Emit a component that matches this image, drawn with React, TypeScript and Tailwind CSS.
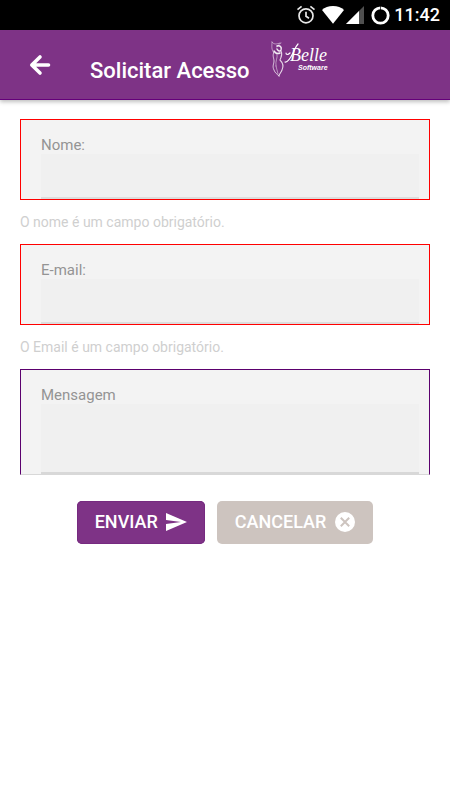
import { useState } from 'react'
import type { ReactNode } from 'react'

export default function App() {
  const [name, setName] = useState('')
  const [email, setEmail] = useState('')
  const [message, setMessage] = useState('')

  return (
    <div className="min-h-screen bg-white font-[Roboto,sans-serif]">
      <StatusBar />

      <header className="flex h-[70px] items-center border-b border-[#65007a] bg-[#7e3386] pl-7 text-white shadow-[0_2px_4px_rgba(0,0,0,0.25)]">
        <button type="button" aria-label="Voltar" className="flex size-6 items-center justify-center">
          <BackIcon />
        </button>
        <h1 className="mt-3 ml-[38px] text-[22px] leading-8 font-medium whitespace-nowrap">Solicitar Acesso</h1>
        <BelleLogo />
      </header>

      <form className="px-5 pt-[19px]" onSubmit={(e) => e.preventDefault()}>
        <Field id="nome" label="Nome:" className="border border-[#ff0000]">
          <input
            id="nome"
            type="text"
            value={name}
            onChange={(e) => setName(e.target.value)}
            className="block h-[45px] w-full border-b-2 border-[#dcdcdc] bg-[#f0f0f0] px-2 text-[15px] outline-none"
          />
        </Field>
        <FieldError>O nome é um campo obrigatório.</FieldError>

        <Field id="email" label="E-mail:" className="border border-[#ff0000]">
          <input
            id="email"
            type="email"
            value={email}
            onChange={(e) => setEmail(e.target.value)}
            className="block h-[45px] w-full border-b-2 border-[#dcdcdc] bg-[#f0f0f0] px-2 text-[15px] outline-none"
          />
        </Field>
        <FieldError>O Email é um campo obrigatório.</FieldError>

        <Field id="mensagem" label="Mensagem" className="border border-[#5b006e] border-b-[#d8d8d8]">
          <textarea
            id="mensagem"
            value={message}
            onChange={(e) => setMessage(e.target.value)}
            className="block h-[70px] w-full resize-none border-b-2 border-[#d8d8d8] bg-[#f0f0f0] p-2 text-[15px] outline-none"
          />
        </Field>

        <div className="mt-[26px] flex justify-center gap-3">
          <button
            type="submit"
            className="flex h-[43px] items-center gap-1.5 rounded-[5px] bg-[#7e3386] pr-[17px] pb-[2px] pl-[18px] text-[18px] font-medium text-white shadow-[inset_0_0_0_1px_#762a80]"
          >
            ENVIAR
            <SendIcon />
          </button>
          <button
            type="button"
            className="flex h-[43px] items-center gap-2 rounded-[5px] bg-[#cdc4bf] pr-[17px] pb-[2px] pl-[18px] text-[18px] font-medium text-white"
          >
            CANCELAR
            <CancelIcon />
          </button>
        </div>
      </form>
    </div>
  )
}

// ── Form pieces ───────────────────────────────────────────────────────────────

function Field({
  id, label, className, children,
}: {
  id: string
  label: string
  className: string
  children: ReactNode
}) {
  return (
    <div className={`bg-[#f3f3f3] pt-4 pr-[10px] pl-5 ${className}`}>
      <label htmlFor={id} className="block text-[15px] leading-[18px] text-[#949494]">
        {label}
      </label>
      {children}
    </div>
  )
}

function FieldError({ children }: { children: ReactNode }) {
  return <p className="flex h-11 items-center text-[14px] leading-5 text-[#cfcfcf]">{children}</p>
}

// ── Status bar ────────────────────────────────────────────────────────────────

function StatusBar() {
  return (
    <div className="flex h-[30px] items-center justify-end bg-black pr-[10px] text-white">
      <svg width="20" height="20" viewBox="0 0 20 20" fill="none" stroke="#e8e8e8" strokeWidth="1.7" className="mr-[6px]">
        <circle cx="10" cy="10.8" r="7" />
        <path d="M1.5 4.6 5.6 1.3M18.5 4.6 14.4 1.3M10 6.8v4.4l3 2" />
      </svg>
      <svg width="22" height="18" viewBox="0 0 22 18" fill="#fff" className="mr-[2px]">
        <path d="M11 17.8 0 3.9C2.6 1.5 6.5 0 11 0s8.4 1.5 11 3.9Z" />
      </svg>
      <svg width="18" height="18" viewBox="0 0 18 18" className="mr-[7px]">
        <path d="M18 0v18H0Z" fill="#505050" />
        <path d="M13 5v13H0Z" fill="#fff" />
      </svg>
      <svg width="19" height="19" viewBox="0 0 19 19" fill="none" stroke="#fff" className="mr-1">
        <circle cx="9.5" cy="9.5" r="7.7" strokeWidth="2.8" />
        <path d="M9.5 0v4.5" stroke="#000" strokeWidth="0.7" />
      </svg>
      <span className="text-[18px] leading-5 font-medium">11:42</span>
    </div>
  )
}

// ── Icons ─────────────────────────────────────────────────────────────────────

function BackIcon() {
  return (
    <svg width="24" height="24" viewBox="0 0 24 24" fill="none" stroke="currentColor" strokeWidth="3.6" strokeLinecap="round" strokeLinejoin="round">
      <path d="M12 4 3.8 12 12 20M4.5 12H20.5" />
    </svg>
  )
}

function SendIcon() {
  return (
    <svg width="24" height="24" viewBox="0 0 24 24" fill="currentColor">
      <path d="M2 21 23 12 2 3v7l15 2-15 2Z" />
    </svg>
  )
}

function CancelIcon() {
  return (
    <svg width="22" height="22" viewBox="0 0 22 22">
      <circle cx="11" cy="11" r="10" fill="#fff" />
      <path d="m6.8 6.8 8.4 8.4M15.2 6.8l-8.4 8.4" stroke="#cdc4bf" strokeWidth="2" />
    </svg>
  )
}

function BelleLogo() {
  return (
    <svg width="64" height="40" viewBox="0 0 64 40" role="img" aria-label="Belle Software" className="mb-3 ml-5">
      {/* figure and the swash that leads into the lettering */}
      <g fill="none" stroke="#fff" strokeLinecap="round">
        <path d="M2 3C2 8 1 10 4 14M2 3c2 3 5 2 8 1M11 4c-2 1-3 2-4 4" strokeWidth="0.8" opacity="0.6" />
        <path d="M7 7c3-1 5 1 4 4-1 2-3 1-4-1M4 12c2 3 4 3 6 2" strokeWidth="1.5" opacity="0.9" />
        <path d="M4 13c-2 4 0 6 0 9s-2 5 0 9c1 3 3 4 5 6" strokeWidth="1" opacity="0.7" />
        <path d="M11 12c2 4 0 6-1 9 3 3 4 6 2 10-1 3-3 4-3 6" strokeWidth="1.1" opacity="0.8" />
        <path d="M7 15c1 4-2 7-1 12M6 27c1 3 1 5 2 8" strokeWidth="0.8" opacity="0.6" />
        <path d="M16 14c0 2 2 2 4 0M15 23c3 1 6-5 8-9s3-7 5-9" strokeWidth="1.2" />
      </g>
      <g fill="#fff" fontStyle="italic">
        <text x="20" y="22" fontSize="18" fontFamily="'Liberation Serif', serif">Belle</text>
        <text x="28" y="31" fontSize="7" fontWeight="bold" fontFamily="'Liberation Sans', sans-serif">Software</text>
      </g>
    </svg>
  )
}
